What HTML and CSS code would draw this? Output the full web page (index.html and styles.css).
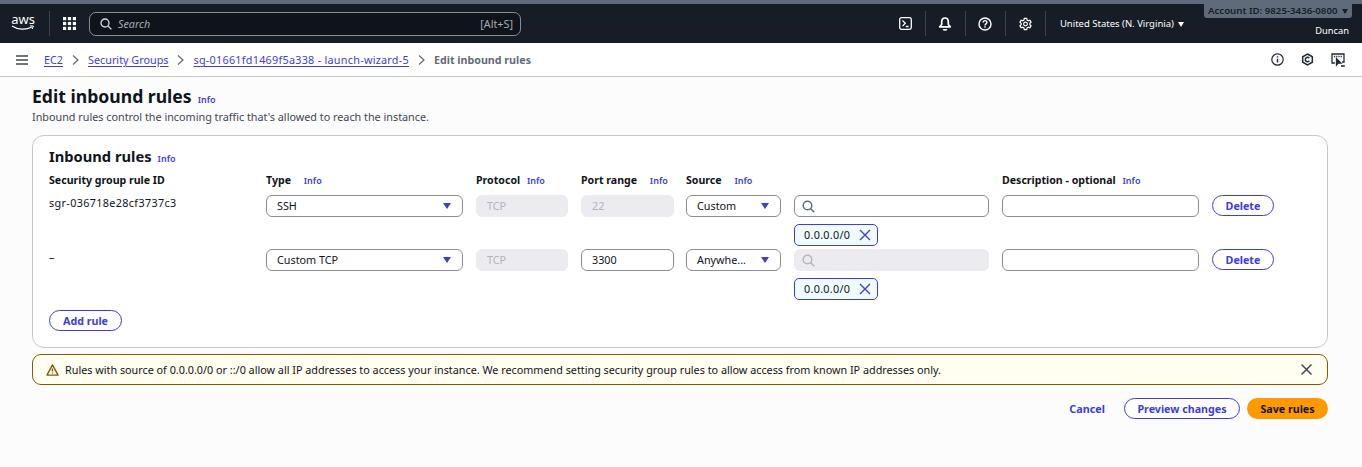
FILE: index.html
```html
<!DOCTYPE html>
<html lang="en">
<head>
<meta charset="UTF-8">
<meta name="viewport" content="width=device-width, initial-scale=1.0">
<title>Edit inbound rules</title>
<link rel="stylesheet" href="styles.css">
</head>
<body>

<div class="top-strip"></div>
<header class="top-nav">
    <div class="aws-logo">
        <span class="aws-word">aws</span>
        <svg class="aws-smile" width="24" height="6" viewBox="0 0 24 6"><path d="M1 1c6 4 14 4 20 1" fill="none" stroke="#fff" stroke-width="1.2"/><path d="M19 .8l3.4.2-1.2 3" fill="none" stroke="#fff" stroke-width="1"/></svg>
    </div>
    <span class="nav-sep"></span>
    <svg class="apps-icon" width="13" height="13" viewBox="0 0 13 13" fill="#fff"><rect width="3.2" height="3.2"/><rect x="4.9" width="3.2" height="3.2"/><rect x="9.8" width="3.2" height="3.2"/><rect y="4.9" width="3.2" height="3.2"/><rect x="4.9" y="4.9" width="3.2" height="3.2"/><rect x="9.8" y="4.9" width="3.2" height="3.2"/><rect y="9.8" width="3.2" height="3.2"/><rect x="4.9" y="9.8" width="3.2" height="3.2"/><rect x="9.8" y="9.8" width="3.2" height="3.2"/></svg>
    <div class="nav-search">
        <svg width="12" height="12" viewBox="0 0 12 12" fill="none" stroke="#d5dbdb" stroke-width="1.3"><circle cx="5" cy="5" r="4"/><path d="M8 8l3.4 3.4"/></svg>
        <span class="nav-search-text">Search</span>
        <span class="nav-search-key">[Alt+S]</span>
    </div>
    <div class="nav-right">
        <span class="nav-icon"><svg width="13" height="13" viewBox="0 0 13 13" fill="none" stroke="#fff" stroke-width="1.300"><rect x=".7" y=".7" width="11.600" height="11.600" rx="1.800"/><path d="M3.500 3.500l2.800 2.800-2.800 2.800M6.800 9.500h2.800"/></svg></span>
        <span class="nav-sep"></span>
        <span class="nav-icon"><svg width="14" height="14" viewBox="0 0 14 14" fill="none" stroke="#fff" stroke-width="1.700"><path d="M7 1c2.300 0 3.300 1.700 3.300 3.800v2.700l2 2.300H1.700l2-2.300V4.800C3.700 2.700 4.700 1 7 1z" stroke-linejoin="round"/><path d="M5.300 12.200c.4 1 3 1 3.400 0" fill="#fff"/></svg></span>
        <span class="nav-sep"></span>
        <span class="nav-icon"><svg width="14" height="14" viewBox="0 0 14 14" fill="none" stroke="#fff" stroke-width="1.400"><circle cx="7" cy="7" r="6"/><path d="M5.200 5.400c0-2.400 3.700-2.400 3.700 0 0 1.500-1.900 1.500-1.900 3"/><path d="M7 9.300v1.400"/></svg></span>
        <span class="nav-sep"></span>
        <span class="nav-icon"><svg width="13" height="14" viewBox="0 0 14 14" fill="none" stroke="#fff" stroke-width="1.300"><path d="M5.700 1h2.600l.4 1.800 1.300.7 1.700-.6 1.300 2.200-1.300 1.200v1.400l1.300 1.200-1.300 2.200-1.700-.6-1.300.7L8.300 13H5.700l-.4-1.800-1.300-.7-1.700.6L1 8.900l1.300-1.200V6.300L1 5.100l1.300-2.200 1.700.6 1.300-.7z"/><circle cx="7" cy="7" r="2"/></svg></span>
        <span class="nav-sep"></span>
        <span class="region">United States (N. Virginia) <i class="caret-white"></i></span>
        <div class="account">
            <span class="account-id">Account ID: 9825-3436-0800 <i class="caret-dark"></i></span>
            <span class="account-name">Duncan</span>
        </div>
    </div>
</header>

<nav class="crumb-bar">
    <svg class="menu-icon" width="12" height="10" viewBox="0 0 12 10" stroke="#414750" stroke-width="1.500"><path d="M0 1h12M0 5h12M0 9h12"/></svg>
    <a class="crumb">EC2</a>
    <svg class="crumb-arrow" width="7" height="10" viewBox="0 0 7 10" fill="none" stroke="#5f6b7a" stroke-width="1.200"><path d="M1 .5l5 4.500-5 4.500"/></svg>
    <a class="crumb">Security Groups</a>
    <svg class="crumb-arrow" width="7" height="10" viewBox="0 0 7 10" fill="none" stroke="#5f6b7a" stroke-width="1.200"><path d="M1 .5l5 4.500-5 4.500"/></svg>
    <a class="crumb crumb-sg">sg-01661fd1469f5a338 - launch-wizard-5</a>
    <svg class="crumb-arrow" width="7" height="10" viewBox="0 0 7 10" fill="none" stroke="#5f6b7a" stroke-width="1.200"><path d="M1 .5l5 4.500-5 4.500"/></svg>
    <span class="crumb-current">Edit inbound rules</span>
    <div class="crumb-tools">
        <svg width="13" height="13" viewBox="0 0 13 13" fill="none" stroke="#232b37" stroke-width="1.200"><circle cx="6.500" cy="6.500" r="5.700"/><path d="M6.500 5.800v3.700M6.500 3.200v1.400" stroke-width="1.400"/></svg>
        <svg width="13" height="13" viewBox="0 0 13 13" fill="none" stroke="#232b37" stroke-width="1.500"><path d="M6.500 1l4.800 2.800v5.400L6.500 12l-4.800-2.800V3.800z"/><path d="M8.300 5.200a2.200 2.200 0 1 0 0 2.600"/></svg>
        <svg width="14" height="14" viewBox="0 0 14 14" fill="none" stroke="#232b37" stroke-width="1.300"><path d="M4 10H1V1h12v8h-2"/><path d="M3 3.500h8" stroke-dasharray="1.200 1" stroke-width="1.600"/><path d="M5.500 5.500v6.500l1.800-1.900h2.700z" fill="#232b37"/><path d="M10 13h3.800" stroke-width="1.600"/></svg>
    </div>
</nav>

<main class="page">
    <div class="page-head">
        <h1>Edit inbound rules</h1>
        <a class="info info-head">Info</a>
    </div>
    <p class="page-desc">Inbound rules control the incoming traffic that's allowed to reach the instance.</p>

    <section class="panel">
        <div class="panel-title">
            <h2>Inbound rules</h2>
            <a class="info">Info</a>
        </div>
        <div class="rules">
            <div class="col-head">Security group rule ID</div>
            <div class="col-head">Type <a class="info info-far">Info</a></div>
            <div class="col-head">Protocol <a class="info">Info</a></div>
            <div class="col-head">Port range <a class="info info-far">Info</a></div>
            <div class="col-head">Source <a class="info info-far">Info</a></div>
            <div class="col-head"></div>
            <div class="col-head">Description - optional <a class="info">Info</a></div>
            <div class="col-head"></div>

            <div class="rule-id">sgr-036718e28cf3737c3</div>
            <div class="field">SSH<i class="caret-blue"></i></div>
            <div class="field disabled">TCP</div>
            <div class="field field-port disabled">22</div>
            <div class="field">Custom<i class="caret-blue"></i></div>
            <div class="source-col">
                <div class="field search-field"><svg width="13" height="13" viewBox="0 0 13 13" fill="none" stroke="#5f6b7a" stroke-width="1.500"><circle cx="5.500" cy="5.500" r="4.300"/><path d="M8.500 8.500l3.800 3.800"/></svg></div>
                <div class="token">0.0.0.0/0<svg width="12" height="12" viewBox="0 0 12 12" fill="none" stroke="#3d3ddb" stroke-width="1.400"><path d="M1 1l10 10M11 1L1 11"/></svg></div>
            </div>
            <div class="field"></div>
            <button class="btn-outline btn-delete">Delete</button>

            <div class="rule-id">–</div>
            <div class="field">Custom TCP<i class="caret-blue"></i></div>
            <div class="field disabled">TCP</div>
            <div class="field field-port">3300</div>
            <div class="field">Anywhe...<i class="caret-blue"></i></div>
            <div class="source-col">
                <div class="field search-field disabled"><svg width="13" height="13" viewBox="0 0 13 13" fill="none" stroke="#b4b4bb" stroke-width="1.500"><circle cx="5.500" cy="5.500" r="4.300"/><path d="M8.500 8.500l3.800 3.800"/></svg></div>
                <div class="token">0.0.0.0/0<svg width="12" height="12" viewBox="0 0 12 12" fill="none" stroke="#3d3ddb" stroke-width="1.400"><path d="M1 1l10 10M11 1L1 11"/></svg></div>
            </div>
            <div class="field"></div>
            <button class="btn-outline btn-delete">Delete</button>
        </div>
        <button class="btn-outline btn-add">Add rule</button>
    </section>

    <div class="alert">
        <svg width="13" height="12" viewBox="0 0 14 13" fill="none" stroke="#855900" stroke-width="1.500"><path d="M7 1l6 11H1z" stroke-linejoin="round"/><path d="M7 4.800v3.400M7 9.200v1.200"/></svg>
        <span class="alert-text">Rules with source of 0.0.0.0/0 or ::/0 allow all IP addresses to access your instance. We recommend setting security group rules to allow access from known IP addresses only.</span>
        <svg class="alert-close" width="11" height="11" viewBox="0 0 11 11" fill="none" stroke="#424650" stroke-width="1.500"><path d="M.5.500l10 10M10.500.500l-10 10"/></svg>
    </div>

    <div class="actions">
        <a class="btn-cancel">Cancel</a>
        <button class="btn-outline btn-preview">Preview changes</button>
        <button class="btn-save">Save rules</button>
    </div>
</main>

</body>
</html>
```

FILE: styles.css
```css
/* Global styles */
* {
    box-sizing: border-box;
}
body {
    font-family: "Noto Sans", Arial, sans-serif;
    font-size: 10.8px;
    margin: 0;
    padding: 0;
    background-color: #fcfcfd;
    color: #0f141a;
    height: 467px;
    overflow: hidden;
}
a {
    color: #3d3ddb;
}

/* Top navigation */
.top-strip {
    height: 4px;
    background-color: #5f6b7a;
}
.top-nav {
    height: 39px;
    background-color: #161d26;
    color: #fff;
    display: flex;
    align-items: center;
    padding-left: 11px;
}
.aws-logo {
    width: 24px;
    height: 24px;
    display: flex;
    flex-direction: column;
    align-items: center;
    margin-right: 14px;
}
.aws-word {
    font-size: 13px;
    line-height: 15px;
}
.aws-smile {
    margin-top: -2px;
}
.nav-sep {
    width: 1px;
    height: 25px;
    background-color: #3b4452;
}
.apps-icon {
    margin-left: 13px;
}
.nav-search {
    width: 432px;
    height: 24px;
    margin-left: 13px;
    border: 1px solid #8c8c94;
    border-radius: 7px;
    display: flex;
    align-items: center;
    padding: 0 7px 0 10px;
    background-color: #0f141a;
}
.nav-search-text {
    font-style: italic;
    color: #a4abb5;
    margin-left: 6px;
}
.nav-search-key {
    margin-left: auto;
    color: #a4abb5;
}
.nav-right {
    margin-left: auto;
    display: flex;
    align-items: center;
    height: 100%;
    padding-right: 10px;
}
.nav-icon {
    width: 39px;
    display: flex;
    justify-content: center;
}
.region {
    width: 158px;
    padding-left: 14px;
    font-size: 9.5px;
    margin-top: -1px;
}
.caret-white, .caret-dark, .caret-blue {
    display: inline-block;
    width: 0;
    height: 0;
    border-left: 3px solid transparent;
    border-right: 3px solid transparent;
    border-top: 5px solid #fff;
    margin-left: 2px;
}
.caret-dark {
    border-top-color: #161d26;
}
.account {
    display: flex;
    flex-direction: column;
    align-items: flex-end;
    align-self: flex-start;
}
.account-id {
    background-color: #5f6b7a;
    color: #161d26;
    font-size: 9.7px;
    font-weight: 600;
    height: 14px;
    line-height: 14px;
    padding: 0 4px;
    border-radius: 0 0 3px 3px;
    white-space: nowrap;
}
.account-name {
    font-size: 9.3px;
    margin-top: 6px;
    padding-right: 3px;
}

/* Breadcrumbs */
.crumb-bar {
    height: 34px;
    background-color: #fff;
    border-bottom: 1px solid #c6c6cd;
    display: flex;
    align-items: center;
    padding: 0 17px 0 16px;
}
.menu-icon {
    margin-right: 16px;
}
.crumb {
    text-decoration: underline;
    text-underline-offset: 2px;
}
.crumb-sg {
    letter-spacing: .27px;
}
.crumb-arrow {
    margin: 0 9px;
}
.crumb-current {
    color: #5f6b7a;
    font-weight: 700;
    font-size: 10.7px;
}
.crumb-tools {
    margin-left: auto;
    display: flex;
    align-items: center;
    gap: 17px;
}

/* Page */
.page {
    padding: 0 34px 0 32px;
}
.page-head {
    display: flex;
    align-items: baseline;
    margin-top: 7px;
    height: 24px;
}
h1 {
    font-size: 17.6px;
    line-height: 24px;
    margin: 0;
}
h2 {
    font-size: 14.7px;
    line-height: 20px;
    margin: 0;
}
.info {
    font-size: 9px;
    font-weight: 600;
    margin-left: 6px;
}
.page-desc {
    color: #424650;
    margin: 1px 0 0;
    line-height: 16px;
}
.panel {
    margin-top: 10px;
    height: 213px;
    background-color: #fff;
    border: 1px solid #c6c6cd;
    border-radius: 12px;
    padding: 10px 16px 11px;
}
.panel-title {
    display: flex;
    align-items: baseline;
    height: 20px;
}

/* Rules table */
.rules {
    display: grid;
    grid-template-columns: 204px 197px 92px 92px 95px 195px 197px 62px;
    column-gap: 13px;
    grid-template-rows: 16px 54px 62px;
    margin-top: 6px;
}
.col-head {
    font-weight: 700;
    font-size: 10.6px;
    line-height: 16px;
    white-space: nowrap;
}
.col-head .info {
    margin-left: 4px;
}
.col-head .info-far {
    margin-left: 10px;
}
.rule-id {
    margin-top: 7px;
    line-height: 16px;
}
.rule-id:not(:first-child) {
    letter-spacing: .35px;
}
.rules > .field, .source-col, .btn-delete, .rule-id {
    align-self: start;
}
.rules > .field, .source-col, .btn-delete {
    margin-top: 7px;
}
.rules > .field-port {
    margin-right: -1px;
}
.field {
    height: 22px;
    border: 1px solid #8c8c94;
    border-radius: 6px;
    background-color: #fff;
    display: flex;
    align-items: center;
    justify-content: space-between;
    padding: 0 10px 1px;
    white-space: nowrap;
}
.caret-blue {
    border-left-width: 4px;
    border-right-width: 4px;
    border-top: 6px solid #3d3ddb;
    flex: none;
    margin-right: 1.5px;
}
.disabled {
    background-color: #ebebf0;
    border-color: #ebebf0;
    color: #b4b4bb;
}
.search-field {
    justify-content: flex-start;
    padding: 0 7px;
}
.token {
    width: 84px;
    height: 22px;
    margin-top: 7px;
    border: 1px solid #3d3ddb;
    border-radius: 5px;
    background-color: #f0fbff;
    display: flex;
    align-items: center;
    justify-content: space-between;
    padding: 0 6px 2px 9px;
    letter-spacing: .3px;
}
.token svg {
    margin-top: 2px;
}

/* Buttons */
button {
    font-family: inherit;
    font-size: 10.7px;
    font-weight: 700;
    cursor: pointer;
}
.btn-outline {
    height: 21px;
    padding: 0;
    border: 1px solid #3d3ddb;
    border-radius: 11px;
    background-color: #fff;
    color: #3d3ddb;
}
.btn-add {
    display: block;
    width: 73px;
    margin-top: 6px;
}
.alert {
    margin-top: 6px;
    height: 31px;
    border: 1px solid #855900;
    border-radius: 9px;
    background-color: #fffef0;
    display: flex;
    align-items: center;
    padding: 0 15px 0 13px;
}
.alert-text {
    margin-left: 6px;
    color: #0f141a;
}
.alert-close {
    margin-left: auto;
}
.actions {
    margin-top: 13px;
    display: flex;
    justify-content: flex-end;
    align-items: center;
}
.btn-cancel {
    font-weight: 700;
    margin-right: 19px;
}
.btn-preview {
    width: 116px;
}
.btn-save {
    width: 81px;
    height: 21px;
    margin-left: 7px;
    border: 0;
    border-radius: 11px;
    background-color: #ff9900;
    color: #0f141a;
}
```
